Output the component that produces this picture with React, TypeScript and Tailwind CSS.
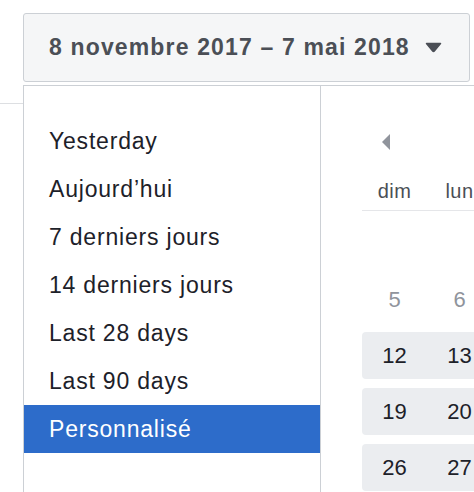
import React from "react";

const presets = [
  "Yesterday",
  "Aujourd’hui",
  "7 derniers jours",
  "14 derniers jours",
  "Last 28 days",
  "Last 90 days",
  "Personnalisé",
];

type Day = { label: string; muted?: boolean };

const weeks: { days: Day[]; inRange: boolean }[] = [
  { days: [{ label: "" }, { label: "" }, { label: "" }, { label: "1" }, { label: "2" }, { label: "3" }, { label: "4" }], inRange: false },
  { days: [{ label: "5", muted: true }, { label: "6", muted: true }, { label: "7", muted: true }, { label: "8" }, { label: "9" }, { label: "10" }, { label: "11" }], inRange: false },
  { days: [{ label: "12" }, { label: "13" }, { label: "14" }, { label: "15" }, { label: "16" }, { label: "17" }, { label: "18" }], inRange: true },
  { days: [{ label: "19" }, { label: "20" }, { label: "21" }, { label: "22" }, { label: "23" }, { label: "24" }, { label: "25" }], inRange: true },
  { days: [{ label: "26" }, { label: "27" }, { label: "28" }, { label: "29" }, { label: "30" }, { label: "" }, { label: "" }], inRange: true },
];

const weekdays = ["dim", "lun", "mar", "mer", "jeu", "ven", "sam"];

export default function App() {
  const selected = "Personnalisé";

  return (
    <div className="relative h-[492px] w-[474px] overflow-hidden bg-white font-['Liberation_Sans',Arial,sans-serif]">
      <div className="pl-[23px] pt-[13px]">
        <button
          type="button"
          className="flex h-[69px] w-[447px] items-center rounded-[3px] border border-[#ccd0d5] bg-[#f5f6f7] pl-[25px] text-[23px] font-bold tracking-[1.15px] text-[#4b4f56]"
        >
          <span>8 novembre 2017 – 7 mai 2018</span>
          <svg className="ml-[15px]" width="17" height="11" viewBox="0 0 17 11">
            <path d="M1.5 1.5 H15.5 L9.3 9 Q8.5 10 7.7 9 Z" fill="#4b4f56" stroke="#4b4f56" strokeWidth="1.5" strokeLinejoin="round" />
          </svg>
        </button>
      </div>
      <div className="mt-[21px] border-t border-[#dddfe2]" />

      {/* dropdown */}
      <div className="absolute left-[23px] top-[85px] flex h-[430px] w-[470px] border border-[#ccd0d5] bg-white">
        <ul className="w-[297px] shrink-0 border-r border-[#ccd0d5] pt-[31px]">
          {presets.map((p) => (
            <li
              key={p}
              className={`flex h-[48px] items-center pl-[25px] text-[23px] tracking-[0.8px] ${
                p === selected ? "bg-[#2d6cca] text-white" : "text-[#1d2129]"
              }`}
            >
              {p}
            </li>
          ))}
        </ul>

        <div className="flex-1 pl-[41px] pt-[48px]">
          <svg className="ml-[19px]" width="10" height="16" viewBox="0 0 10 16">
            <path d="M9 0 L1 8 L9 16 Z" fill="#90949c" />
          </svg>
          <div className="mt-[21px] flex h-[40px] w-[455px] items-center border-b border-[#e5e6e9]">
            {weekdays.map((w) => (
              <div key={w} className="w-[65px] shrink-0 text-center text-[20px] tracking-[0.5px] text-[#4b4f56]">
                {w}
              </div>
            ))}
          </div>
          <div className="mt-[9px] flex flex-col gap-[9px]">
            {weeks.map((wk, i) => (
              <div
                key={i}
                className={`flex h-[47px] w-[455px] items-center ${wk.inRange ? "rounded-l-[4px] bg-[#ebedf0]" : ""}`}
              >
                {wk.days.map((d, j) => (
                  <div
                    key={j}
                    className={`w-[65px] shrink-0 text-center text-[22px] ${d.muted ? "text-[#90949c]" : "text-[#1d2129]"}`}
                  >
                    {d.label}
                  </div>
                ))}
              </div>
            ))}
          </div>
        </div>
      </div>
    </div>
  );
}
